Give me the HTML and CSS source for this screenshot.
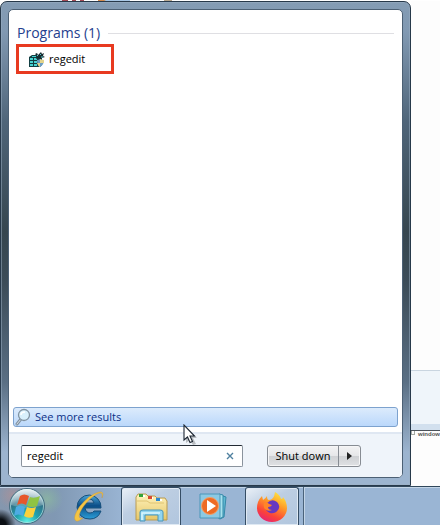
FILE: index.html
```html
<!DOCTYPE html>
<html lang="en">
<head>
<meta charset="utf-8">
<title>Start menu</title>
<link rel="stylesheet" href="styles.css">
</head>
<body>
<main class="desktop">
  <section class="start-menu" aria-label="Start menu">
    <div class="menu-panel">
      <div class="results">
        <h1 class="group-title">Programs (1)</h1>
        <a class="result" href="#regedit">
          <svg class="result-icon" viewBox="0 0 17 17" aria-hidden="true">
            <path d="M1 6l3-2h6v3h4v7l-2 2H1z" fill="#123f43"/>
            <path d="M2 7h3v2H2zM6 7h3v2H6zM2 10h3v2H2zM6 10h3v2H6zM2 13h3v2H2zM6 13h3v2H6zM4 5h4v1H4z" fill="#47d3d1"/>
            <path d="M7 3l2-1 1 2 3-3 1 2 2-1-1 3 2 1-3 1-1 2-2-2-3 1 1-3z" fill="#172a30"/>
            <path d="M9 4l1 1M12 4l1-1M13 6h2" stroke="#5fd0d0"/>
            <path d="M9 9q2 0 3-1 2 1 4 1 0 5-4 7-3-2-3-7z" fill="#6d9ec4"/>
            <path d="M12 8q2 1 4 1v3h-4zM9 12h3v4q-2-1-3-4z" fill="#e2d38b"/>
          </svg>
          <span>regedit</span>
        </a>
        <a class="more" href="#results">
          <svg class="more-icon" viewBox="0 0 16 18" aria-hidden="true">
            <path d="M6 11l-4 5" stroke="#8293a3" stroke-width="3" stroke-linecap="round"/>
            <path d="M6 11l-4 5" stroke="#d5dee6" stroke-linecap="round"/>
            <circle cx="9" cy="7" r="5.5" fill="#d9f0fc" stroke="#8193a2" stroke-width="1.3"/>
            <path d="M6 7q0-3 4-3" fill="none" stroke="#fff" stroke-width="1.5"/>
          </svg>
          <span>See more results</span>
        </a>
      </div>
      <form class="search-bar">
        <div class="search-box">
          <input class="search-input" type="text" value="regedit" aria-label="Search programs and files">
          <button class="clear" type="button" aria-label="Clear search">
            <svg viewBox="0 0 8 8" aria-hidden="true"><path d="M1 1l6 6M7 1L1 7" stroke="#4f809f" stroke-width="1.4"/></svg>
          </button>
        </div>
        <div class="power">
          <button class="shutdown" type="button">Shut down</button>
          <button class="power-more" type="button" aria-label="More power options">
            <svg viewBox="0 0 5 8" aria-hidden="true"><path d="M0 0l5 4-5 4z" fill="#222"/></svg>
          </button>
        </div>
      </form>
    </div>
    <svg class="cursor" viewBox="0 0 14 21" aria-hidden="true">
      <path d="M3 3v16l4-3 3 5 3-1-3-6h4z" fill="#555" opacity=".35"/>
      <path d="M1 1v15l3.500-3 2.500 5.500 2.500-1-2.500-5.500h4.500z" fill="#fff" stroke="#1d2733" stroke-width="1.100"/>
    </svg>
  </section>
  <aside class="behind" aria-hidden="true">
    <div class="behind-page"></div>
    <div class="behind-details"></div>
    <div class="behind-list"><i class="file-mark"></i>window</div>
  </aside>
</main>
<nav class="taskbar" aria-label="Taskbar">
  <button class="task start" type="button" aria-label="Start">
    <svg viewBox="0 0 38 38" aria-hidden="true">
      <defs>
        <radialGradient id="orb" cx=".5" cy=".95" r=".9"><stop offset="0" stop-color="#5cf0e4"/><stop offset=".35" stop-color="#22a3ae"/><stop offset=".7" stop-color="#2f7389"/><stop offset="1" stop-color="#a5bfca"/></radialGradient>
        <linearGradient id="gloss" x2="0" y2="1"><stop stop-color="#fff" stop-opacity=".75"/><stop offset="1" stop-color="#fff" stop-opacity=".15"/></linearGradient>
      </defs>
      <circle cx="19" cy="19" r="17.500" fill="url(#orb)" stroke="#476d80"/>
      <circle cx="19" cy="19" r="16.500" fill="none" stroke="#b7e3e4" opacity=".7"/>
      <path d="M3 18a16 16 0 0 1 32 0q-16 6-32 0z" fill="url(#gloss)"/>
      <path d="M12 9q4-3 9 0l-3 9q-4-3-9 0z" fill="#e7572b"/>
      <path d="M22 10q4 2 10-1l-3 10q-5 2-10 0z" fill="#8fc443"/>
      <path d="M8 20q5-3 9 0l-2 9q-5-3-9 0z" fill="#4eabe3"/>
      <path d="M19 20q4 2 9 0l-3 10q-5 2-9-1z" fill="#fbd13c"/>
    </svg>
  </button>
  <button class="task ie" type="button" aria-label="Internet Explorer">
    <svg viewBox="0 0 34 34" aria-hidden="true">
      <defs><linearGradient id="ie" x2="0" y2="1"><stop stop-color="#4aa8da"/><stop offset=".45" stop-color="#0b4c86"/><stop offset="1" stop-color="#2c9ed8"/></linearGradient></defs>
      <path d="M30 19H14q1 5 5 5 3 0 4-2h7q-3 8-11 8A12 12 0 1 1 30 19zM14 14h9q-1-4-4-4-4 0-5 4z" fill="url(#ie)" stroke="#164f7b"/>
      <path d="M31 9q3-7-3-6Q19 5 9 17 2 27 4 31q2 3 8-2-4 1-4-2 1-7 11-17 8-7 11-6 2 1 1 5z" fill="#f4c443" stroke="#c99635" stroke-width=".4"/>
    </svg>
  </button>
  <button class="task open explorer" type="button" aria-label="Windows Explorer">
    <svg viewBox="0 0 34 30" aria-hidden="true">
      <defs><linearGradient id="folder" x2="0" y2="1"><stop stop-color="#fff3bd"/><stop offset="1" stop-color="#e6c768"/></linearGradient></defs>
      <path d="M2 28V5l2-3h8l2 2h7l2 2h8l2 3v19z" fill="url(#folder)" stroke="#b99b53"/>
      <path d="M6 3h5v2H6zM14 5h5v2h-5zM22 7h6v2h-6z" fill="#fff"/>
      <path d="M5 2h4v3H5z" fill="#35a33b"/><path d="M14 4h4v3h-4z" fill="#d94932"/><path d="M22 6h4v3h-4z" fill="#2c88d0"/>
      <path d="M3 9h10l3 2h14" stroke="#dfc473" fill="none"/>
      <path d="M6 29V20q0-2 3-2h17q3 0 3 2v9h-5v-6H11v6z" fill="#91d5ef" stroke="#4895b9"/>
      <path d="M8 28v-7h18" stroke="#dcf7ff" stroke-width="1.500" fill="none"/>
    </svg>
  </button>
  <button class="task player" type="button" aria-label="Windows Media Player">
    <svg viewBox="0 0 28 28" aria-hidden="true">
      <path d="M21 3l6 2-2 20-4 2z" fill="#60b9d2" stroke="#3488a8"/>
      <path d="M20 2l4 1v22l-4 2z" fill="#a6e2ed" stroke="#3488a8"/>
      <path d="M1 2h20v24H1z" fill="#8cc9e3" stroke="#4a96ba"/>
      <circle cx="11" cy="14" r="8.500" fill="#ee6b24" stroke="#f3a169"/>
      <path d="M8 8l9 6-9 6z" fill="#fff"/>
    </svg>
  </button>
  <button class="task open firefox" type="button" aria-label="Firefox">
    <svg viewBox="0 0 32 32" aria-hidden="true">
      <defs><linearGradient id="fox" x1=".8" y1="0" x2=".3" y2="1"><stop stop-color="#ffed45"/><stop offset=".4" stop-color="#ff9a27"/><stop offset=".75" stop-color="#fb4339"/><stop offset="1" stop-color="#e62474"/></linearGradient></defs>
      <path d="M19 1q5 3 6 7 2 0 2-2 4 5 4 11a15 14 0 0 1-30 0Q1 10 6 5l1 4q3-2 4-4 0 4 2 4 5 0 6-8z" fill="url(#fox)"/>
      <path d="M11 12q5-5 10-1 4 4 1 8-3 4-8 3-5-2-4-6 3 0 4-2-2 0-3-2z" fill="#6738c2"/>
      <path d="M8 12q3-2 5 1l3 1q-1 2-4 2 0 3 4 3-4 2-7-1-2-2-1-6z" fill="#ff8528"/>
    </svg>
  </button>
  <span class="task-edge"></span>
</nav>
</body>
</html>
```

FILE: styles.css
```css
* { box-sizing: border-box; }

body {
  margin: 0;
  height: 100vh;
  display: flex;
  flex-direction: column;
  overflow: hidden;
  background: #fdfdfd;
  font: 11px/16px "Open Sans", "Noto Sans", sans-serif;
  color: #000;
}

button { padding: 0; font: inherit; color: inherit; }
svg { display: block; }
a { text-decoration: none; color: inherit; }

.desktop {
  flex: 1;
  display: flex;
  min-height: 0;
  padding-top: 1px;
  background: linear-gradient(90deg, #fff 50px, #d5e6f2 50px 62px, #a34a55 62px 68px, #fff 68px 72px, #a34a55 72px 76px, #fff 76px 80px, #a34a55 80px 84px, #fff 84px 98px, #d28a4c 98px 104px, #a9c8e6 106px 130px, #fff 130px 164px, #b8a890 164px 172px, #fff 172px);
}

.start-menu {
  position: relative;
  flex: 1;
  display: flex;
  padding: 7px;
  border: 1px solid #27394a;
  border-radius: 7px 7px 0 0;
  background: linear-gradient(#849cb4, #8199b2 30px, #4f6579 120px, #36464f 230px, #3c4c58 280px, #5a6f84 380px, #9cb4cf 450px);
  box-shadow: inset 0 0 0 1px #9cb0c380;
}

.menu-panel {
  flex: 1;
  display: flex;
  flex-direction: column;
  min-width: 0;
  border: 1px solid #4c6074;
  border-radius: 5px;
  overflow: hidden;
  background: #fff;
}

.results {
  flex: 1;
  display: flex;
  flex-direction: column;
  padding: 13px 4px 5px;
}

.group-title {
  display: flex;
  align-items: center;
  gap: 8px;
  margin: 0 0 1px;
  padding: 0 4px;
  font-size: 14px;
  line-height: 20px;
  font-weight: 400;
  color: #24408e;
}

.group-title::after {
  content: "";
  flex: 1;
  height: 1px;
  background: #dfdfe3;
}

.result {
  align-self: flex-start;
  display: flex;
  align-items: center;
  gap: 4px;
  width: 98px;
  height: 30px;
  margin-left: 3px;
  padding-left: 9px;
  border: 3px solid #e83a20;
}

.result-icon { width: 17px; height: 17px; }

.more {
  display: flex;
  align-items: center;
  gap: 4px;
  height: 20px;
  margin-top: auto;
  padding-left: 1px;
  border: 1px solid #7da2ce;
  border-radius: 3px;
  background: linear-gradient(#dcebfc, #bbd8fb);
  color: #0b2f86;
}

.more-icon { width: 16px; height: 18px; }

.search-bar {
  display: flex;
  align-items: center;
  gap: 24px;
  height: 45px;
  margin: 0;
  padding: 0 41px 0 12px;
  border-top: 2px solid #dfe7f2;
  background: #eff4fa;
}

.search-box {
  flex: 1;
  display: flex;
  height: 22px;
  min-width: 0;
  border: 1px solid #8a939d;
  border-top-color: #222a33;
  border-radius: 2px;
  background: #fff;
}

.search-input {
  flex: 1;
  min-width: 0;
  padding: 0 5px;
  border: 0;
  outline: 0;
  background: none;
  font: inherit;
}

.clear {
  display: grid;
  place-items: center;
  width: 24px;
  border: 0;
  background: none;
}

.clear svg { width: 8px; height: 8px; }

.power {
  display: flex;
  height: 22px;
  border: 1px solid #878c93;
  border-radius: 3px;
  background: linear-gradient(#f3f3f4, #e6e7e9 48%, #cfd1d4 52%, #dfe1e4);
  box-shadow: inset 0 0 0 1px #f6f6f7;
}

.shutdown {
  width: 70px;
  border: 0;
  background: none;
}

.power-more {
  display: grid;
  place-items: center;
  width: 22px;
  border: 0;
  border-left: 1px solid #878c93;
  background: none;
}

.power-more svg { width: 5px; height: 8px; }

.cursor {
  position: absolute;
  left: 182px;
  bottom: 40px;
  width: 14px;
  height: 21px;
}

.behind {
  width: 29px;
  display: flex;
  flex-direction: column;
  background: #fdfdfd;
}

.behind-page { height: 369px; }

.behind-details {
  height: 60px;
  border-top: 1px solid #c9d5e0;
  border-bottom: 6px solid #d2e0ee;
  background: #eff5fa;
}

.behind-list {
  flex: 1;
  display: flex;
  align-items: flex-start;
  gap: 3px;
  border-top: 1px solid #4b525a;
  font: bold 6px/6px "Liberation Sans", sans-serif;
  color: #555;
}

.file-mark {
  width: 4px;
  height: 4px;
  border: 1px solid #a3a9a3;
  border-top: 0;
}

.taskbar {
  flex: none;
  display: flex;
  height: 39px;
  border-top: 1px solid #30475b;
  background:
    radial-gradient(circle at 0 100%, #0b0f14 6px, #0b0f1400 16px),
    radial-gradient(circle at 47px 12px, #8fc49a90, #8fc49a00 16px),
    radial-gradient(circle at 12px 8px, #b98f8f90, #b98f8f00 14px),
    linear-gradient(90deg, #8597ae, #8098b3 55px, #9ab5d4 125px);
  box-shadow: inset 0 1px #c3d5e7;
}

.task {
  display: grid;
  place-items: center;
  border: 0;
  background: none;
}

.start { width: 54px; }
.start svg { width: 38px; height: 38px; }
.ie { width: 67px; }
.ie svg { width: 34px; height: 34px; }
.player { width: 64px; }
.player svg { width: 28px; height: 28px; }
.explorer { width: 60px; }
.explorer svg { width: 34px; height: 30px; }
.firefox { width: 54px; }
.firefox svg { width: 32px; height: 32px; }

.open {
  border: 1px solid #354d65;
  border-bottom: 0;
  border-radius: 3px 3px 0 0;
  background: linear-gradient(150deg, #eaf0f7, #bdcee2 40%, #b1c6de);
  box-shadow: inset 0 0 0 1px #dfe9f3;
}

.task-edge {
  width: 5px;
  border-right: 1px solid #4b637b;
  box-shadow: 1px 0 #c3d5e7;
}
```
